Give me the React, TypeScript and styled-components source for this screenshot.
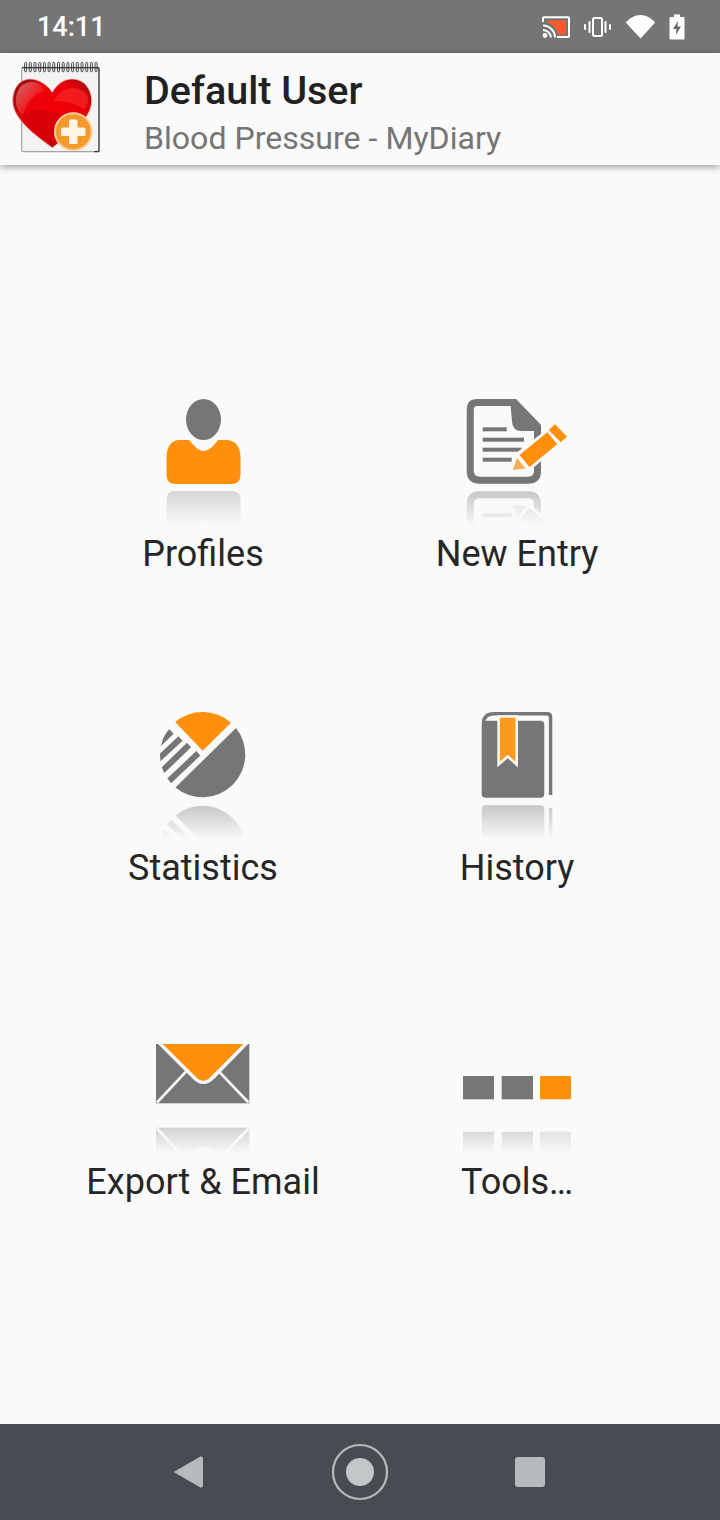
import React from 'react'
import styled, { createGlobalStyle } from 'styled-components'

const GRAY = '#757678'
const ORANGE = '#ff8f0c'
const PAGE = '#fafafa'

const GlobalStyle = createGlobalStyle`
  html, body {
    margin: 0;
    padding: 0;
    background: ${PAGE};
  }
  #root {
    height: 1520px;
  }
`

/* icon with the fading mirror image below it, mirror line is y=92.5 in all six */
const Reflected = ({ name, children }: { name: string; children: React.ReactNode }) => (
  <IconSvg viewBox="0 0 130 130">
    <defs>
      <linearGradient id={`${name}-fade`} gradientUnits="userSpaceOnUse" x1="0" y1="95" x2="0" y2="129">
        <stop offset="0" stopColor="#fff" stopOpacity="0.4" />
        <stop offset="1" stopColor="#fff" stopOpacity="0.02" />
      </linearGradient>
      <mask id={`${name}-mask`} maskUnits="userSpaceOnUse" x="0" y="0" width="130" height="130">
        <rect x="0" y="0" width="130" height="130" fill={`url(#${name}-fade)`} />
      </mask>
    </defs>
    {children}
    <g mask={`url(#${name}-mask)`}>
      <Mirror transform="translate(0 185) scale(1 -1)">{children}</Mirror>
    </g>
  </IconSvg>
)

const ProfileIcon = () => (
  <Reflected name="profile">
    <ellipse cx="65.5" cy="24.5" rx="17.5" ry="20.5" fill={GRAY} />
    <path
      d="M40 45 H51 Q57 52 60 54 Q65.5 58 71 54 Q75 52 80 45 H90 Q102 47 102.5 62 V80 Q102.5 89 93 89 H38 Q28.5 89 28.5 80 V62 Q29 47 40 45 Z"
      fill={ORANGE}
    />
  </Reflected>
)

const EntryIcon = () => (
  <Reflected name="entry">
    <path
      d="M25 7.5 H62 L85.5 32 V76 Q85.5 85.2 76 85.2 H28 Q18.2 85.2 18.2 76 V15 Q18.2 7.5 25 7.5 Z"
      fill="none"
      stroke={GRAY}
      strokeWidth="7"
    />
    <path d="M58 4 H64 L89 30 V36 H70 Q60 36 60 26 Z" fill={GRAY} />
    <rect x="30.7" y="32.3" width="24" height="4" fill={GRAY} />
    <rect x="30.7" y="42.7" width="41.3" height="4" fill={GRAY} />
    <rect x="30.7" y="52.7" width="39" height="4" fill={GRAY} />
    <rect x="30.7" y="62.7" width="29" height="4" fill={GRAY} />
    <path
      d="M60.7 75 L65 60.5 L95.3 37.3 L105.3 49.3 L77 73 Z M103 29.3 L115 41.7 L108.7 47.3 L96.7 35 Z"
      fill={PAGE}
      stroke={PAGE}
      strokeWidth="5"
    />
    <path d="M67.5 60 L95.3 37.3 L105.3 49.3 L77.5 72 Z" fill={ORANGE} />
    <path d="M103 29.3 L115 41.7 L108.7 47.3 L96.7 35 Z" fill={ORANGE} />
    <path d="M60.7 75 L65 63 L73.5 73.5 Z" fill="#f7ad58" />
  </Reflected>
)

const StatsIcon = () => (
  <Reflected name="stats">
    <clipPath id="stats-disc">
      <circle cx="64.7" cy="45.7" r="42.7" />
    </clipPath>
    <path d="M64.7 41.7 L37.2 13 A42.7 42.7 0 0 1 93 13.7 Z" fill={ORANGE} />
    <path d="M98 19 A42.7 42.7 0 0 1 37.4 78.5 Z" fill={GRAY} />
    <g clipPath="url(#stats-disc)" stroke={GRAY} strokeWidth="6" fill="none">
      <line x1="14" y1="41.7" x2="33.5" y2="22.5" />
      <line x1="14" y1="56" x2="42.5" y2="29.5" />
      <line x1="16" y1="70" x2="51" y2="36" />
      <line x1="26" y1="76.8" x2="60.3" y2="44.3" />
    </g>
  </Reflected>
)

const HistoryIcon = () => (
  <Reflected name="history">
    <rect x="29.7" y="11.7" width="62.6" height="77" rx="4" fill={GRAY} />
    <path
      d="M31.4 14 Q32 4.8 42 4.8 H95 Q98.6 4.8 98.6 8.5 V86"
      fill="none"
      stroke={GRAY}
      strokeWidth="3.4"
    />
    <path d="M46.6 7.5 H64.7 V55.5 L55.7 47.5 L46.6 55.5 Z" fill="#fb9a20" stroke="#fdf6ec" strokeWidth="2.6" />
  </Reflected>
)

const EmailIcon = () => (
  <Reflected name="email">
    <rect x="18" y="21" width="93.3" height="59.3" fill={GRAY} />
    <path d="M48 48.7 L19 79.5 M82 49.7 L110.5 79.5" stroke={PAGE} strokeWidth="2.6" fill="none" />
    <path d="M18 19 H112 L77 55 Q65.3 67 54 55 L18 19 Z" fill={PAGE} />
    <path d="M24.7 21 H105.3 L72.5 54 Q65.3 61.5 58 54 Z" fill={ORANGE} />
  </Reflected>
)

const ToolsIcon = () => (
  <Reflected name="tools">
    <rect x="11" y="53" width="31" height="23.3" fill={GRAY} />
    <rect x="49.7" y="53" width="31.3" height="23.3" fill={GRAY} />
    <rect x="88" y="53" width="31" height="23.3" fill={ORANGE} />
  </Reflected>
)

const Logo = () => (
  <LogoSvg viewBox="0 0 100 100">
    <defs>
      <radialGradient id="heart-fill" cx="0.52" cy="0.45" r="0.6">
        <stop offset="0" stopColor="#f40008" />
        <stop offset="0.68" stopColor="#e80008" />
        <stop offset="1" stopColor="#8e1012" />
      </radialGradient>
      <linearGradient id="heart-shine" x1="0" y1="0" x2="1" y2="1">
        <stop offset="0" stopColor="#e8a09a" stopOpacity="0.7" />
        <stop offset="1" stopColor="#ff3030" stopOpacity="0" />
      </linearGradient>
    </defs>
    <rect x="15.7" y="8.7" width="77.3" height="84" rx="1.6" fill="#f3f3f1" stroke="#666" strokeWidth="0.7" />
    <path d="M16 8.7 H93 V92.7 H88" fill="none" stroke="#222" strokeWidth="1" />
    {Array.from({ length: 16 }, (_, i) => (
      <rect key={i} x={18.6 + i * 4.7} y="3.4" width="2" height="9.4" rx="1" fill="none" stroke="#333" strokeWidth="0.9" />
    ))}
    <path
      d="M46.3 33.3 C40 24 31 20 24 20 C13 20 6.7 30 6.7 42 C6.7 60 30 77 46.3 88.7 C62 77 85.7 60 85.7 42 C85.7 30 78 20 66 20 C58 20 51 25 46.3 33.3 Z"
      fill="url(#heart-fill)"
      stroke="#f6b0a8"
      strokeWidth="0.8"
    />
    <path d="M10 42 C10 30 17 23 26 23 C33 23 38 28 38 32 C30 34 20 42 17 58 C12 52 10 47 10 42 Z" fill="url(#heart-shine)" />
    <path d="M48 42 C54 28 70 25 80 34 C84 42 82 46 78 50 C68 44 58 42 48 42 Z" fill="#ff3a34" opacity="0.45" />
    <path d="M14 56 C30 48 54 50 72 64 C62 74 54 80 46.3 86 C34 77 21 66 14 56 Z" fill="#c8000a" opacity="0.55" />
    <circle cx="67.3" cy="72.7" r="19.4" fill="#f8cfa0" />
    <circle cx="67.3" cy="72.7" r="17.5" fill="#f39a2a" />
    <path
      d="M63 62 Q63 60.5 64.5 60.5 H70 Q71.5 60.5 71.5 62 V68.5 H78 Q79.5 68.5 79.5 70 V75.5 Q79.5 77 78 77 H71.5 V83.5 Q71.5 85 70 85 H64.5 Q63 85 63 83.5 V77 H56.5 Q55 77 55 75.5 V70 Q55 68.5 56.5 68.5 H63 Z"
      fill="#fff4e6"
    />
  </LogoSvg>
)

const menu = [
  { label: 'Profiles', Icon: ProfileIcon },
  { label: 'New Entry', Icon: EntryIcon },
  { label: 'Statistics', Icon: StatsIcon },
  { label: 'History', Icon: HistoryIcon },
  { label: 'Export & Email', Icon: EmailIcon },
  { label: 'Tools…', Icon: ToolsIcon },
]

const App = () => (
  <Screen>
    <GlobalStyle />
    <StatusBar>
      <Clock>14:11</Clock>
      <StatusIcons>
        <svg width="28" height="22" viewBox="0 0 28 22">
          <path d="M1 6 V2.2 Q1 1.2 2 1.2 H26 Q27 1.2 27 2.2 V20 Q27 21 26 21 H15" fill="none" stroke="#fff" strokeWidth="2" />
          <path d="M5 4.5 H24 V18.5 H15.5 C15 12 10.5 7.5 5 7 Z" fill="#fc5a2b" />
          <path d="M1 9.5 C7.5 9.5 13 15 13 21.5 M1 14 C5 14 9 17.5 9 21.5" fill="none" stroke="#fff" strokeWidth="2" />
          <circle cx="3" cy="19.5" r="2.4" fill="#fff" />
        </svg>
        <svg width="29" height="20" viewBox="0 0 29 20">
          <rect x="10" y="1" width="9" height="18" rx="1.5" fill="none" stroke="#fff" strokeWidth="2" />
          <rect x="5.5" y="4" width="2" height="12" rx="1" fill="#fff" />
          <rect x="21.5" y="4" width="2" height="12" rx="1" fill="#fff" />
          <rect x="1" y="7" width="2" height="6" rx="1" fill="#fff" />
          <rect x="26" y="7" width="2" height="6" rx="1" fill="#fff" />
        </svg>
        <svg width="31" height="25" viewBox="0 0 31 25">
          <path d="M15.5 24.5 L0.8 8.5 C4.5 4.5 9.8 1 15.5 1 C21.2 1 26.5 4.5 30.2 8.5 Z" fill="#fff" />
        </svg>
        <svg width="16" height="26" viewBox="0 0 16 26">
          <path d="M5 0.5 H11 V3 H14.5 Q15.5 3 15.5 4 V24.5 Q15.5 25.5 14.5 25.5 H1.5 Q0.5 25.5 0.5 24.5 V4 Q0.5 3 1.5 3 H5 Z" fill="#fff" />
          <path d="M9 7 L4 15 H7.5 L6.8 21 L12 12.5 H8.5 Z" fill="#6b6b6b" />
        </svg>
      </StatusIcons>
    </StatusBar>

    <AppBar>
      <Logo />
      <Titles>
        <Title>Default User</Title>
        <Subtitle>Blood Pressure - MyDiary</Subtitle>
      </Titles>
    </AppBar>

    <Menu>
      {menu.map(({ label, Icon }) => (
        <MenuItem key={label}>
          <Icon />
          <MenuLabel>{label}</MenuLabel>
        </MenuItem>
      ))}
    </Menu>

    <NavBar>
      <svg width="30" height="34" viewBox="0 0 30 34">
        <path d="M0.5 17 L26 2.2 Q28.5 1 28.5 3.5 V30.5 Q28.5 33 26 31.8 Z" fill="#b7babc" stroke="#b7babc" strokeLinejoin="round" />
      </svg>
      <svg width="58" height="58" viewBox="0 0 58 58">
        <circle cx="29" cy="29" r="27" fill="none" stroke="#b7babc" strokeWidth="2.2" />
        <circle cx="29" cy="29" r="14" fill="#c4c7c8" />
      </svg>
      <StopSquare />
    </NavBar>
  </Screen>
)

const Screen = styled.div`
  width: 720px;
  height: 1520px;
  display: flex;
  flex-direction: column;
  overflow: hidden;
  background: ${PAGE};
  font-family: Roboto, 'Liberation Sans', sans-serif;
`

const StatusBar = styled.div`
  height: 53px;
  flex: none;
  display: flex;
  align-items: center;
  justify-content: space-between;
  padding: 0 35px 0 37px;
  background: #757575;
  color: #fff;
`

const Clock = styled.span`
  font-size: 27px;
  font-weight: 500;
`

const StatusIcons = styled.div`
  display: flex;
  align-items: center;
  gap: 13px;
`

const AppBar = styled.header`
  position: relative;
  z-index: 1;
  height: 112px;
  flex: none;
  display: flex;
  align-items: center;
  padding-left: 6px;
  background: ${PAGE};
  box-shadow: 0 2px 7px rgba(0, 0, 0, 0.38);
`

const LogoSvg = styled.svg`
  width: 100px;
  height: 100px;
  flex: none;
`

const Titles = styled.div`
  margin-left: 38px;
  padding-top: 8px;
  display: flex;
  flex-direction: column;
`

const Title = styled.div`
  font-size: 39.5px;
  line-height: 48px;
  font-weight: 500;
  color: #212121;
`

const Subtitle = styled.div`
  margin-top: 1px;
  font-size: 32.1px;
  line-height: 44px;
  color: #757575;
`

const Menu = styled.main`
  flex: 1;
  display: grid;
  grid-template-columns: 314px 314px;
  grid-auto-rows: 180px;
  row-gap: 134px;
  align-content: start;
  justify-content: start;
  padding: 230px 46px 0;
`

const MenuItem = styled.div`
  display: flex;
  flex-direction: column;
  align-items: center;
`

const IconSvg = styled.svg`
  width: 130px;
  height: 130px;
  flex: none;
`

const Mirror = styled.g`
  filter: grayscale(1);
`

const MenuLabel = styled.div`
  margin-top: 7px;
  font-size: 36px;
  line-height: 44px;
  color: #262626;
  white-space: nowrap;
`

const NavBar = styled.nav`
  height: 96px;
  flex: none;
  display: grid;
  grid-template-columns: 30px 58px 30px;
  justify-content: center;
  column-gap: 127px;
  align-items: center;
  background: #464c51;
`

const StopSquare = styled.div`
  width: 30px;
  height: 30px;
  margin-left: -1px;
  border-radius: 3px;
  background: #b7babc;
`

export default App
